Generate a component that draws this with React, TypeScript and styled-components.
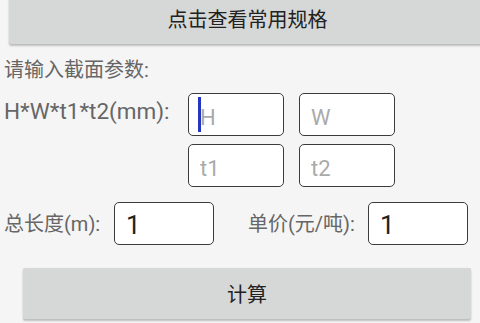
import styled, { createGlobalStyle } from 'styled-components';

const GlobalStyle = createGlobalStyle`
	html, body {
		margin: 0;
		padding: 0;
		background-color: #f5f5f5;
	}

	body {
		font-family: Roboto, 'Noto Sans CJK SC', sans-serif;
	}
`;

const Screen = styled.div`
	width: 480px;
	height: 323px;
	overflow: hidden;
	background-color: #f5f5f5;
	display: flex;
	flex-direction: column;
`;

const RaisedButton = styled.button<{ $inset: string }>`
	flex-shrink: 0;
	border: none;
	border-radius: 2px;
	background-color: #d6d7d7;
	box-shadow: 0 2px 2px rgba(0, 0, 0, 0.22), 0 0 1px rgba(0, 0, 0, 0.12);
	color: #222;
	font-family: Roboto, 'Noto Sans CJK SC', sans-serif;
	font-size: 20px;
	padding: 0;
	margin: ${({ $inset }) => $inset};
`;

const TopButton = styled(RaisedButton)`
	height: 52px;
	width: 477px;
`;

const CalcButton = styled(RaisedButton)`
	height: 51px;
	width: 448px;
`;

const SectionLabel = styled.div`
	margin-top: 14px;
	padding-left: 4px;
	font-size: 20px;
	line-height: 24px;
	color: #666;
`;

const ParamRow = styled.div`
	display: flex;
	align-items: flex-start;
	margin-top: 11px;
	padding-left: 4px;
`;

const RowLabel = styled.span<{ $width: number }>`
	width: ${({ $width }) => $width}px;
	font-size: 20px;
	line-height: 24px;
	color: #666;
	white-space: nowrap;
`;

const ParamLabel = styled(RowLabel)`
	margin-top: 6px;
	font-size: 22.5px;
`;

const FieldGrid = styled.div`
	display: grid;
	grid-template-columns: 96px 96px;
	column-gap: 15px;
	row-gap: 8px;
`;

const FieldWrap = styled.div`
	position: relative;
`;

const Field = styled.input<{ $size: number }>`
	box-sizing: border-box;
	display: block;
	width: 96px;
	height: 43px;
	border: 1.6px solid #3c3c3c;
	border-radius: 5px;
	background-color: #fff;
	padding: 6px 0 0 11px;
	font-family: Roboto, 'Noto Sans CJK SC', sans-serif;
	font-size: ${({ $size }) => $size}px;
	color: #222;
	outline: none;

	&::placeholder {
		color: #aaa;
	}
`;

const WideField = styled(Field)`
	width: 100px;
	padding-top: 2px;
`;

const Caret = styled.span`
	position: absolute;
	left: 10px;
	top: 4px;
	width: 3px;
	height: 35px;
	background-color: #2436c0;
`;

const TotalsRow = styled.div`
	display: flex;
	align-items: center;
	margin-top: 15px;
	padding-left: 4px;
`;

const TotalsGroup = styled.div<{ $gap: number }>`
	display: flex;
	align-items: center;
	margin-left: ${({ $gap }) => $gap}px;
`;

const ButtonRow = styled.div`
	display: flex;
	margin-top: 23px;
`;

const params = [
	{ key: 'H', focused: true },
	{ key: 'W', focused: false },
	{ key: 't1', focused: false },
	{ key: 't2', focused: false },
];

function App() {
	return (
		<Screen>
			<GlobalStyle />
			<TopButton type="button" $inset="-8px 0 0 9px">
				点击查看常用规格
			</TopButton>

			<SectionLabel>请输入截面参数:</SectionLabel>

			<ParamRow>
				<ParamLabel $width={184}>H*W*t1*t2(mm):</ParamLabel>
				<FieldGrid>
					{params.map((param) => (
						<FieldWrap key={param.key}>
							<Field $size={22} placeholder={param.key} readOnly />
							{param.focused && <Caret />}
						</FieldWrap>
					))}
				</FieldGrid>
			</ParamRow>

			<TotalsRow>
				<RowLabel $width={110}>总长度(m):</RowLabel>
				<WideField $size={26} defaultValue="1" readOnly />
				<TotalsGroup $gap={34}>
					<RowLabel $width={120}>单价(元/吨):</RowLabel>
					<WideField $size={26} defaultValue="1" readOnly />
				</TotalsGroup>
			</TotalsRow>

			<ButtonRow>
				<CalcButton type="button" $inset="0 0 0 23px">
					计算
				</CalcButton>
			</ButtonRow>
		</Screen>
	);
}

export default App;
